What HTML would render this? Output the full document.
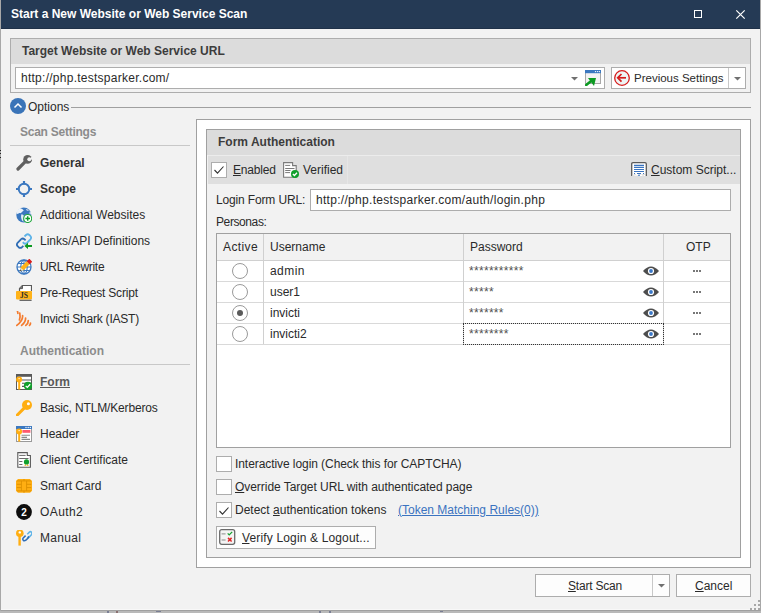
<!DOCTYPE html>
<html><head><meta charset="utf-8">
<style>
*{margin:0;padding:0;box-sizing:border-box}
html,body{width:761px;height:613px;overflow:hidden;background:#fff}
body{position:relative;font-family:"Liberation Sans",sans-serif;font-size:12px;color:#2a2a2a}
.a{position:absolute}
.t{position:absolute;white-space:nowrap;line-height:14px}
.b{font-weight:bold}
.box{position:absolute;border:1px solid #adadad}
.u{text-decoration:underline;text-underline-offset:1px}
</style></head><body>
<!-- dialog -->
<div class="a" style="left:0;top:611px;width:761px;height:2px;background:#b9b9b9"></div>
<div class="a" style="left:0;top:0;width:761px;height:611px;background:#f2f2f2;border:1px solid #a0a0a0;border-top:none"></div>
<div class="a" style="left:1px;top:609px;width:759px;height:1px;background:#f8f8f8"></div>
<div class="a" style="left:1px;top:0;width:759px;height:29px;background:#253a55"></div>
<div class="a" style="left:1px;top:28px;width:759px;height:1px;background:#1f3149"></div>
<div class="a" style="left:0;top:0;width:1px;height:611px;background:#a8a8a8"></div>
<div class="a" style="left:760px;top:0;width:1px;height:611px;background:#a8a8a8"></div>
<div class="t b" style="left:11px;top:7px;color:#fff">Start a New Website or Web Service Scan</div>
<!-- maximize / close -->
<div class="a" style="left:694px;top:10px;width:8px;height:8px;border:1px solid #fff"></div>
<svg class="a" style="left:735px;top:9px" width="11" height="11" viewBox="0 0 11 11"><path d="M1.3 1.3L9.7 9.7M9.7 1.3L1.3 9.7" stroke="#fff" stroke-width="1.2"/></svg>

<!-- Target group -->
<div class="box" style="left:10px;top:38px;width:741px;height:55px;background:#f2f2f2"></div>
<div class="a" style="left:11px;top:39px;width:739px;height:25px;background:#dcdcdc"></div>
<div class="t b" style="left:22px;top:44px;color:#3c3c3c">Target Website or Web Service URL</div>
<div class="box" style="left:15px;top:67px;width:590px;height:22px;background:#fff"></div>
<div class="t" style="left:21px;top:71px;letter-spacing:0.26px">http://php.testsparker.com/</div>
<svg class="a" style="left:571px;top:77px" width="7" height="4"><path d="M0 0H7L3.5 3.5Z" fill="#707070"/></svg>
<!-- Previous settings -->
<div class="box" style="left:611px;top:67px;width:135px;height:22px;background:#fff"></div>
<div class="a" style="left:728px;top:68px;width:1px;height:20px;background:#c8c8c8"></div>
<svg class="a" style="left:734px;top:77px" width="7" height="4"><path d="M0 0H7L3.5 3.5Z" fill="#707070"/></svg>
<div class="t" style="left:634px;top:71px;font-size:11.5px">Previous Settings</div>

<!-- Options -->
<div class="a" style="left:10px;top:98px;width:16px;height:16px;border-radius:50%;background:#3a74b8"></div>
<svg class="a" style="left:10px;top:98px" width="16" height="16"><path d="M4.5 9.5L8 6L11.5 9.5" stroke="#fff" stroke-width="1.5" fill="none"/></svg>
<div class="t" style="left:28px;top:100px">Options</div>
<div class="a" style="left:71px;top:107px;width:680px;height:1px;background:#a0a0a0"></div>

<!-- sidebar -->
<div class="t b" style="left:20px;top:125px;color:#8c8c8c;letter-spacing:-0.25px">Scan Settings</div>
<div class="a" style="left:10px;top:145px;width:180px;height:1px;background:#c8c8c8"></div>
<div class="t b" style="left:40px;top:156px;color:#333">General</div>
<div class="t b" style="left:40px;top:182px;color:#333">Scope</div>
<div class="t" style="left:40px;top:208px">Additional Websites</div>
<div class="t" style="left:40px;top:234px">Links/API Definitions</div>
<div class="t" style="left:40px;top:260px;letter-spacing:-0.3px">URL Rewrite</div>
<div class="t" style="left:40px;top:286px;letter-spacing:-0.2px">Pre-Request Script</div>
<div class="t" style="left:40px;top:312px;letter-spacing:-0.22px">Invicti Shark (IAST)</div>

<div class="t b" style="left:20px;top:344px;color:#8c8c8c">Authentication</div>
<div class="a" style="left:10px;top:364px;width:180px;height:1px;background:#c8c8c8"></div>
<div class="t b u" style="left:40px;top:375px;color:#595959">Form</div>
<div class="t" style="left:40px;top:401px;letter-spacing:-0.15px">Basic, NTLM/Kerberos</div>
<div class="t" style="left:40px;top:427px">Header</div>
<div class="t" style="left:40px;top:453px">Client Certificate</div>
<div class="t" style="left:40px;top:479px">Smart Card</div>
<div class="t" style="left:40px;top:505px;letter-spacing:0.4px">OAuth2</div>
<div class="t" style="left:40px;top:531px;letter-spacing:0.3px">Manual</div>


<!-- sidebar icons -->
<svg class="a" style="left:16px;top:155px" width="16" height="16" viewBox="0 0 16 16">
 <path d="M2 14L8.8 7.2" stroke="#606060" stroke-width="3.2" stroke-linecap="round"/>
 <circle cx="11.6" cy="4.4" r="4.4" fill="#606060"/>
 <circle cx="13.3" cy="4.2" r="2" fill="#f2f2f2"/>
 <path d="M13 4.5L17 0.5V4.5Z" fill="#f2f2f2"/>
</svg>
<svg class="a" style="left:16px;top:181px" width="16" height="16" viewBox="0 0 16 16">
 <circle cx="8" cy="8" r="5.3" fill="none" stroke="#3b78c0" stroke-width="1.9"/>
 <path d="M8 0V3.5M8 12.5V16M0 8H3.5M12.5 8H16" stroke="#3b78c0" stroke-width="2.2"/>
</svg>
<svg class="a" style="left:16px;top:207px" width="16" height="16" viewBox="0 0 16 16">
 <circle cx="7.8" cy="8" r="7.5" fill="#3b78c0"/>
 <path d="M0.6 6.5C0.8 4 2 2.2 4 1.2C5.5 1.5 7 2.5 7.8 3.2C7 4.5 5.5 5 4.8 6.3C4 6 3 5.5 2.2 6.8C1.5 7 1 6.8 0.6 6.5Z" fill="#fff" opacity=".9"/>
 <path d="M9.8 2C11 2.3 12.5 2.8 13 3.5L11.5 3.8L10.5 3.2Z" fill="#fff" opacity=".8"/>
 <path d="M13.5 4.5L15.2 5.5L15 7.5L13.5 7Z" fill="#fff" opacity=".7"/>
 <path d="M5.5 7.2C6.8 7.5 8 8 7.8 9.5C7.5 11 7.2 12.5 7.5 14.8C6 14 5.5 12.5 5.2 11C5 9.5 5 8.2 5.5 7.2Z" fill="#fff" opacity=".85"/>
 <circle cx="11.7" cy="11.5" r="4" fill="#fff" stroke="#1fa83a" stroke-width="1.1"/>
 <path d="M11.7 9.2V13.8M9.4 11.5H14" stroke="#0e9c2a" stroke-width="1.5"/>
</svg>
<svg class="a" style="left:16px;top:233px" width="16" height="16" viewBox="0 0 16 16">
 <path d="M5.2 6.2L1.6 9.8Q0.2 11.5 1.6 13.2L2.6 14.2Q4.3 15.6 6 14.2L7.4 12.8" fill="none" stroke="#2f6db5" stroke-width="1.8"/>
 <path d="M5.2 6.2Q6.8 4.8 8.4 6.2L9.6 7.4" fill="none" stroke="#2f6db5" stroke-width="1.8"/>
 <path d="M10.8 10L14.4 6.4Q15.8 4.7 14.4 3L13.4 2Q11.7 0.6 10 2L8.5 3.5" fill="none" stroke="#5db3e8" stroke-width="1.8"/>
 <path d="M10.8 10Q9.2 11.4 7.6 10L6.8 9.2" fill="none" stroke="#5db3e8" stroke-width="1.8"/>
 <path d="M8.4 12.9L12 9.7V11.9H16V13.9H12V16.1Z" fill="#0c9a22"/>
</svg>
<svg class="a" style="left:16px;top:259px" width="16" height="16" viewBox="0 0 16 16">
 <circle cx="8" cy="8" r="7" fill="#fff" stroke="#3b78c0" stroke-width="1.3"/>
 <ellipse cx="8" cy="8" rx="3.2" ry="7" fill="none" stroke="#3b78c0" stroke-width="1.1"/>
 <path d="M1 8H15M2 4.5H14M2 11.5H14M8 1V15" stroke="#3b78c0" stroke-width="1.1"/>
 <path d="M4.4 8.6L10.7 2.3L13.7 5.3L7.4 11.6Z" fill="#ffb31a"/>
 <path d="M10.7 2.3L13.3 -0.3L16.3 2.7L13.7 5.3Z" fill="#d9201e"/>
 <path d="M4.4 8.6L7.4 11.6L3.6 12.4Z" fill="#f4e6c0"/>
 <path d="M4.2 10.2L5.8 11.8L3.6 12.4Z" fill="#505050"/>
</svg>
<svg class="a" style="left:16px;top:285px" width="16" height="16" viewBox="0 0 16 16">
 <path d="M3.5 6V3.4L6.4 0.5H15.5V6" fill="#fff" stroke="#5a5a5a" stroke-width="1.2"/>
 <path d="M3.3 3.6H6.5V0.5" fill="#777" stroke="#5a5a5a" stroke-width="1"/>
 <rect x="0" y="6" width="16" height="8.4" rx="0.8" fill="#ffb31a"/>
 <path d="M3.5 15.3H15.6" stroke="#5a5a5a" stroke-width="1.2"/>
 <text x="8" y="12.6" text-anchor="middle" font-family="Liberation Serif" font-size="7.5" font-weight="bold" fill="#2a2a2a">JS</text>
</svg>
<svg class="a" style="left:16px;top:311px" width="16" height="16" viewBox="0 0 16 16">
 <g fill="none" stroke="#f47c30" stroke-width="1.7" stroke-linecap="round">
 <path d="M0.8 -1.5Q1.8 0.5 1.9 2.5"/>
 <path d="M3.8 2.2Q4.5 5.5 3.4 9"/>
 <path d="M6.6 4.6Q7 9.5 0.8 14.4"/>
 <path d="M9.6 7Q9.8 11 5.6 14.4"/>
 <path d="M12.3 9.5Q12.4 12.5 9.8 14.4"/>
 <path d="M14.5 12Q14.6 13.5 13.5 14.4"/>
 </g>
</svg>

<svg class="a" style="left:16px;top:374px" width="16" height="16" viewBox="0 0 16 16">
 <rect x="0.5" y="0.5" width="15" height="15" fill="#fff" stroke="#5a5a5a"/>
 <rect x="0" y="0" width="16" height="2.8" fill="#5a5a5a"/>
 <path d="M6 6H16M6 9.2H16M6 12.4H16" stroke="#5a5a5a" stroke-width="1.1"/>
 <circle cx="3.1" cy="5.6" r="3" fill="#ffae12"/>
 <rect x="2.2" y="7" width="2" height="8.6" fill="#ffae12"/>
 <rect x="2.6" y="4" width="1" height="1.2" fill="#fff"/>
 <circle cx="12" cy="11.8" r="4.1" fill="#10a02c"/>
 <path d="M9.7 11.9L11.3 13.4L14.2 10.2" fill="none" stroke="#fff" stroke-width="1.3"/>
</svg>
<svg class="a" style="left:16px;top:400px" width="16" height="16" viewBox="0 0 16 16">
 <path d="M1.3 15L7.6 8.7" stroke="#ffae12" stroke-width="3" stroke-linecap="square"/>
 <circle cx="11" cy="5" r="5" fill="#ffae12"/>
 <circle cx="12.4" cy="3.7" r="1.5" fill="#fff"/>
</svg>
<svg class="a" style="left:16px;top:426px" width="16" height="16" viewBox="0 0 16 16">
 <rect x="0.5" y="0.5" width="15" height="15" fill="#fff" stroke="#9a9a9a"/>
 <rect x="0" y="0" width="16" height="3" fill="#3b78c0"/>
 <circle cx="10" cy="1.5" r=".7" fill="#fff"/><circle cx="12.2" cy="1.5" r=".7" fill="#fff"/><circle cx="14.3" cy="1.5" r=".7" fill="#fff"/>
 <rect x="6.4" y="4" width="8" height="2.8" fill="#ff5a6e"/>
 <path d="M5.5 9.3H14M5.5 11.4H11M5.5 13.4H14" stroke="#8a8a8a" stroke-width="1.1"/>
 <circle cx="3.1" cy="5.6" r="3" fill="#ffae12"/>
 <rect x="2.2" y="7" width="2" height="8.6" fill="#ffae12"/>
 <rect x="2.6" y="4" width="1" height="1.2" fill="#fff"/>
</svg>
<svg class="a" style="left:16px;top:452px" width="16" height="16" viewBox="0 0 16 16">
 <path d="M1.8 0.6H11.3V3.5H14.4V15.3H1.8Z" fill="#fff" stroke="#5a5a5a" stroke-width="1.1"/>
 <path d="M3.2 3.4H9.6M3.2 6.5H12.5M3.2 9.5H6.4M3.2 12.5H6.4" stroke="#6a6a6a" stroke-width="1"/>
 <path d="M8.2 13.5L9.3 12L10.5 13.9Z M10.7 13.9L11.6 12L12.9 13.5Z" fill="#ffae12"/>
 <circle cx="10.5" cy="9.9" r="2.6" fill="#10a02c"/>
</svg>
<svg class="a" style="left:16px;top:478px" width="16" height="16" viewBox="0 0 16 16">
 <path d="M2 1H14L16 3V12.8L14 14.8H2L0 12.8V3Z" fill="#ffae12"/>
 <path d="M0.8 2.9H15.2M0.8 12.9H15.2M0.8 6.3H5.4M10.6 6.3H15.2M0.8 9.6H5.4M10.6 9.6H15.2M5.4 2.9V12.9M10.6 2.9V12.9M8 1V2.9M8 12.9V14.8" stroke="#dc9000" stroke-width=".9" fill="none"/>
</svg>
<svg class="a" style="left:16px;top:504px" width="16" height="16" viewBox="0 0 16 16">
 <circle cx="8" cy="8" r="7.9" fill="#0d0d0d"/>
 <text x="8" y="11.8" text-anchor="middle" font-family="Liberation Sans" font-size="10" font-weight="bold" fill="#fff">2</text>
</svg>
<svg class="a" style="left:16px;top:530px" width="16" height="16" viewBox="0 0 16 16">
 <circle cx="3.8" cy="3.3" r="3.8" fill="#ffae12"/>
 <circle cx="3.8" cy="2.4" r="1.2" fill="#fff"/>
 <path d="M3.6 6L3.6 15.6" stroke="#ffae12" stroke-width="2.4"/>
 <path d="M11.3 4.2L13.4 2.1Q14.4 1.2 15.4 2.1T15.4 4.9L13.2 7.1Q12.2 8 11.2 7.1" fill="none" stroke="#5db3e8" stroke-width="1.5"/>
 <path d="M9.6 5.6L7.2 8Q6.2 9 7.2 10.2T9.9 10.2L12.2 7.9Q13 7 12.2 6.2" fill="none" stroke="#2f6db5" stroke-width="1.5"/>
</svg>

<!-- right panel -->
<div class="box" style="left:196px;top:119px;width:555px;height:449px;background:#fff;border-color:#a0a0a0"></div>
<div class="box" style="left:206px;top:129px;width:535px;height:429px;background:#f2f2f2;border-color:#a0a0a0"></div>
<div class="a" style="left:207px;top:130px;width:533px;height:25px;background:#dcdcdc"></div>
<div class="t b" style="left:218px;top:135px;color:#3c3c3c">Form Authentication</div>
<div class="a" style="left:208px;top:155px;width:532px;height:1px;background:#ececec"></div>
<div class="a" style="left:208px;top:156px;width:532px;height:28px;background:#dfdfdf"></div>
<div class="a" style="left:347px;top:156px;width:1px;height:28px;background:#e6e6e6"></div>
<div class="box" style="left:211px;top:162px;width:16px;height:16px;background:#fff"></div>
<div class="t" style="left:233px;top:163px;letter-spacing:-0.2px"><span class="u">E</span>nabled</div>
<div class="t" style="left:303px;top:163px">Verified</div>
<div class="t" style="left:651px;top:163px"><span class="u">C</span>ustom Script...</div>

<div class="t" style="left:216px;top:193px;letter-spacing:-0.15px">Login Form URL:</div>
<div class="box" style="left:310px;top:189px;width:421px;height:22px;background:#fff"></div>
<div class="t" style="left:316px;top:193px;letter-spacing:0.3px">http://php.testsparker.com/auth/login.php</div>
<div class="t" style="left:216px;top:215px;letter-spacing:-0.4px">Personas:</div>

<!-- grid -->
<div class="box" style="left:216px;top:233px;width:515px;height:215px;background:#fff;border-color:#a0a0a0"></div>
<div class="a" style="left:217px;top:234px;width:513px;height:26px;background:#f2f2f2"></div>

<div class="a" style="left:217px;top:260px;width:513px;height:1px;background:#d0d0d0"></div>
<div class="a" style="left:217px;top:281px;width:513px;height:1px;background:#d9d9d9"></div>
<div class="a" style="left:217px;top:302px;width:513px;height:1px;background:#d9d9d9"></div>
<div class="a" style="left:217px;top:323px;width:513px;height:1px;background:#d9d9d9"></div>
<div class="a" style="left:217px;top:344px;width:513px;height:1px;background:#d9d9d9"></div>
<div class="a" style="left:263px;top:234px;width:1px;height:110px;background:#d0d0d0"></div>
<div class="a" style="left:463px;top:234px;width:1px;height:110px;background:#d0d0d0"></div>
<div class="a" style="left:663px;top:234px;width:1px;height:110px;background:#d0d0d0"></div>
<div class="t" style="left:223px;top:240px;letter-spacing:0.4px">Active</div>
<div class="t" style="left:270px;top:240px">Username</div>
<div class="t" style="left:470px;top:240px">Password</div>
<div class="t" style="left:686px;top:240px">OTP</div>
<div class="a" style="left:232px;top:263px;width:16px;height:16px;border-radius:50%;border:1px solid #9a9a9a;background:#fff"></div>
<div class="t" style="left:270px;top:264px;letter-spacing:0.45px">admin</div>
<div class="t" style="left:469px;top:264px;font-size:12px;letter-spacing:0.3px;color:#505050">***********</div>
<svg class="a" style="left:643px;top:266px" width="16" height="10" viewBox="0 0 16 10"><path d="M0 5Q8 -4 16 5Q8 14 0 5Z" fill="#4d4d4d"/><circle cx="8" cy="5" r="3.1" fill="#fff"/><circle cx="8" cy="5" r="1.9" fill="#3a78c8"/></svg>
<div class="a" style="left:693px;top:270px;width:2px;height:2px;background:#777"></div><div class="a" style="left:696px;top:270px;width:2px;height:2px;background:#777"></div><div class="a" style="left:699px;top:270px;width:2px;height:2px;background:#777"></div>
<div class="a" style="left:232px;top:284px;width:16px;height:16px;border-radius:50%;border:1px solid #9a9a9a;background:#fff"></div>
<div class="t" style="left:270px;top:285px">user1</div>
<div class="t" style="left:469px;top:285px;font-size:12px;letter-spacing:0.3px;color:#505050">*****</div>
<svg class="a" style="left:643px;top:287px" width="16" height="10" viewBox="0 0 16 10"><path d="M0 5Q8 -4 16 5Q8 14 0 5Z" fill="#4d4d4d"/><circle cx="8" cy="5" r="3.1" fill="#fff"/><circle cx="8" cy="5" r="1.9" fill="#3a78c8"/></svg>
<div class="a" style="left:693px;top:291px;width:2px;height:2px;background:#777"></div><div class="a" style="left:696px;top:291px;width:2px;height:2px;background:#777"></div><div class="a" style="left:699px;top:291px;width:2px;height:2px;background:#777"></div>
<div class="a" style="left:232px;top:305px;width:16px;height:16px;border-radius:50%;border:1px solid #9a9a9a;background:#fff"></div>
<div class="a" style="left:237px;top:310px;width:6px;height:6px;border-radius:50%;background:#5a5a5a"></div>
<div class="t" style="left:270px;top:306px">invicti</div>
<div class="t" style="left:469px;top:306px;font-size:12px;letter-spacing:0.3px;color:#505050">*******</div>
<svg class="a" style="left:643px;top:308px" width="16" height="10" viewBox="0 0 16 10"><path d="M0 5Q8 -4 16 5Q8 14 0 5Z" fill="#4d4d4d"/><circle cx="8" cy="5" r="3.1" fill="#fff"/><circle cx="8" cy="5" r="1.9" fill="#3a78c8"/></svg>
<div class="a" style="left:693px;top:312px;width:2px;height:2px;background:#777"></div><div class="a" style="left:696px;top:312px;width:2px;height:2px;background:#777"></div><div class="a" style="left:699px;top:312px;width:2px;height:2px;background:#777"></div>
<div class="a" style="left:232px;top:326px;width:16px;height:16px;border-radius:50%;border:1px solid #9a9a9a;background:#fff"></div>
<div class="t" style="left:270px;top:327px">invicti2</div>
<div class="t" style="left:469px;top:327px;font-size:12px;letter-spacing:0.3px;color:#505050">********</div>
<svg class="a" style="left:643px;top:329px" width="16" height="10" viewBox="0 0 16 10"><path d="M0 5Q8 -4 16 5Q8 14 0 5Z" fill="#4d4d4d"/><circle cx="8" cy="5" r="3.1" fill="#fff"/><circle cx="8" cy="5" r="1.9" fill="#3a78c8"/></svg>
<div class="a" style="left:693px;top:333px;width:2px;height:2px;background:#777"></div><div class="a" style="left:696px;top:333px;width:2px;height:2px;background:#777"></div><div class="a" style="left:699px;top:333px;width:2px;height:2px;background:#777"></div>
<div class="a" style="left:463px;top:323px;width:201px;height:22px;border:1px dotted #333"></div>
<!-- checkboxes -->
<div class="box" style="left:216px;top:456px;width:16px;height:16px;background:#fff"></div>
<div class="t" style="left:235px;top:457px;letter-spacing:-0.07px">Interactive login (Check this for CAPTCHA)</div>
<div class="box" style="left:216px;top:479px;width:16px;height:16px;background:#fff"></div>
<div class="t" style="left:235px;top:480px;letter-spacing:-0.05px"><span class="u">O</span>verride Target URL with authenticated page</div>
<div class="box" style="left:216px;top:502px;width:16px;height:16px;background:#fff"></div>
<div class="t" style="left:235px;top:503px">Detect <span class="u">a</span>uthentication tokens</div>
<div class="t u" style="left:398px;top:503px;color:#3a73c0">(Token Matching Rules(0))</div>
<div class="box" style="left:216px;top:526px;width:160px;height:23px;background:#fdfdfd"></div>
<div class="t" style="left:242px;top:531px;letter-spacing:0.15px"><span class="u">V</span>erify Login &amp; Logout...</div>


<svg class="a" style="left:213px;top:165px" width="12" height="10" viewBox="0 0 12 10"><path d="M1.5 5L4.5 8.2L10.5 1.5" fill="none" stroke="#333" stroke-width="1.1"/></svg>
<svg class="a" style="left:283px;top:162px" width="16" height="16" viewBox="0 0 16 16">
 <path d="M0.6 0.6H9.6V3.6H13.2V15.2H0.6Z" fill="#fff" stroke="#7a7a7a" stroke-width="1.1"/>
 <path d="M2.2 3.4H7.2M2.2 6.5H11.5M2.2 8.5H7.5M2.2 10.6H7" stroke="#7a7a7a" stroke-width="1"/>
 <circle cx="12" cy="12" r="4" fill="#10a02c"/>
 <path d="M9.9 12L11.4 13.5L14 10.7" fill="none" stroke="#fff" stroke-width="1.3"/>
</svg>
<svg class="a" style="left:631px;top:162px" width="16" height="15" viewBox="0 0 16 15">
 <path d="M0.7 14V2Q0.7 0.7 2 0.7H14Q15.3 0.7 15.3 2V14" fill="#fff" stroke="#5a5a5a" stroke-width="1.3"/>
 <path d="M0.7 14L4 11.5L6 14L9 11.5L12 14L15.3 11.5" fill="#dcdcdc" stroke="none"/>
 <path d="M3 3.4H13M3 5.4H13M3 7.5H13M3 9.5H13" stroke="#3a74c0" stroke-width="1.1"/>
 <path d="M3 11.5H4M6 11.5H10M12 11.5H13M7 13.2H9" stroke="#3a74c0" stroke-width="1.1"/>
</svg>
<svg class="a" style="left:503px;top:505px" width="12" height="10" viewBox="0 0 12 10"></svg>
<svg class="a" style="left:218px;top:506px" width="12" height="10" viewBox="0 0 12 10"><path d="M1.5 5L4.5 8.2L10.5 1.5" fill="none" stroke="#333" stroke-width="1.1"/></svg>
<svg class="a" style="left:219px;top:529px" width="17" height="16" viewBox="0 0 17 16">
 <rect x="0.7" y="0.7" width="15" height="14.6" rx="2" fill="#f4f4f4" stroke="#6a6a6a" stroke-width="1.3"/>
 <path d="M2.6 4.9H6.6M2.6 11H6.6" stroke="#8a8a8a" stroke-width="1"/>
 <path d="M8.7 4.4L10.2 5.9L13.2 2.9" fill="none" stroke="#18a030" stroke-width="1.3"/>
 <path d="M9 8.9L12.6 12.5M12.6 8.9L9 12.5" stroke="#e02828" stroke-width="1.5"/>
</svg>
<!-- url input icon -->
<svg class="a" style="left:585px;top:70px" width="16" height="16" viewBox="0 0 16 16">
 <rect x="0.5" y="0.5" width="15" height="13" fill="#f2f2f2" stroke="#a8a8a8"/>
 <rect x="0" y="0" width="16" height="3.2" fill="#3b78c0"/>
 <circle cx="10.5" cy="1.6" r=".7" fill="#fff"/><circle cx="12.5" cy="1.6" r=".7" fill="#fff"/><circle cx="14.4" cy="1.6" r=".7" fill="#fff"/>
 <path d="M1.2 15L6.5 10.8" stroke="#0c9a22" stroke-width="2.6" stroke-linecap="round"/>
 <path d="M3 8H11L9 16Z" fill="#0c9a22"/>
</svg>
<svg class="a" style="left:614px;top:70px" width="16" height="16" viewBox="0 0 16 16">
 <circle cx="8" cy="8" r="7.3" fill="#eef4f4" stroke="#d61c1c" stroke-width="1.3"/>
 <path d="M4 7.8H12" stroke="#d61c1c" stroke-width="1.7"/>
 <path d="M7.5 4L3.7 7.8L7.5 11.6" fill="none" stroke="#d61c1c" stroke-width="1.7"/>
</svg>

<!-- bottom buttons -->
<div class="box" style="left:535px;top:574px;width:135px;height:23px;background:#fdfdfd"></div>
<div class="a" style="left:652px;top:575px;width:1px;height:21px;background:#c8c8c8"></div>
<div class="t" style="left:568px;top:579px;letter-spacing:-0.2px"><span class="u">S</span>tart Scan</div>
<svg class="a" style="left:658px;top:584px" width="7" height="4"><path d="M0 0H7L3.5 3.5Z" fill="#707070"/></svg>
<div class="box" style="left:676px;top:574px;width:75px;height:23px;background:#fdfdfd"></div>
<div class="t" style="left:695px;top:579px"><span class="u">C</span>ancel</div>
<div class="a" style="left:107px;top:611px;width:2px;height:2px;background:#7a7f95"></div>
<div class="a" style="left:116px;top:611px;width:2px;height:2px;background:#8a7070"></div>
<div class="a" style="left:156px;top:611px;width:5px;height:1px;background:#7a7f95"></div>
<div class="a" style="left:319px;top:611px;width:2px;height:2px;background:#7a7f95"></div>
<div class="a" style="left:329px;top:611px;width:2px;height:2px;background:#7a7f95"></div>
<div class="a" style="left:440px;top:611px;width:3px;height:1px;background:#7a7f95"></div>
<div class="a" style="left:758px;top:600px;width:2px;height:2px;background:#a8a8a8"></div>
<div class="a" style="left:758px;top:604px;width:2px;height:2px;background:#a8a8a8"></div>
<div class="a" style="left:754px;top:604px;width:2px;height:2px;background:#a8a8a8"></div>
<div class="a" style="left:750px;top:608px;width:2px;height:2px;background:#a8a8a8"></div>
<div class="a" style="left:754px;top:608px;width:2px;height:2px;background:#a8a8a8"></div>
<div class="a" style="left:758px;top:608px;width:2px;height:2px;background:#a8a8a8"></div>
<div class="a" style="left:0;top:150px;width:1px;height:1px;background:#222"></div>
<div class="a" style="left:0;top:153px;width:1px;height:1px;background:#222"></div>
<div class="a" style="left:0;top:157px;width:1px;height:1px;background:#222"></div>
</body></html>
